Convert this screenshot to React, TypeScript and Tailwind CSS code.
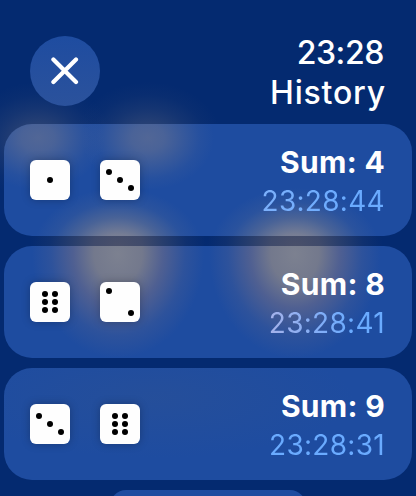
import React from "react"

interface Roll {
  dice: number[]
  time: string
  glow: string
  tint: string
}

// pip centers on a 40x40 die
const pips: Record<number, [number, number][]> = {
  1: [[20, 20]],
  2: [[9, 9], [31, 31]],
  3: [[9, 12], [20, 20], [31, 28]],
  6: [[15, 12], [25, 12], [15, 20], [25, 20], [15, 28], [25, 28]]
}

const rolls: Roll[] = [
  {
    dice: [1, 3],
    time: "23:28:44",
    glow: "bg-[radial-gradient(66px_52px_at_34px_14px,#687292b0,#68729298_25%,#68729258_52%,#6872921c_78%,transparent),radial-gradient(66px_52px_at_144px_14px,#687292b0,#68729298_25%,#68729258_52%,#6872921c_78%,transparent),radial-gradient(86px_66px_at_114px_130px,#868692f0,#868692d8_30%,#80808c70_55%,#80808c20_78%,transparent),radial-gradient(86px_66px_at_291px_130px,#868692f0,#868692d8_30%,#80808c70_55%,#80808c20_78%,transparent)]",
    tint: "from-[#7cb0fb]"
  },
  {
    dice: [6, 2],
    time: "23:28:41",
    glow: "bg-[radial-gradient(86px_104px_at_114px_8px,#82848ff0,#7f7f8ae0_28%,#7870868c_52%,#7870862c_78%,transparent),radial-gradient(86px_104px_at_291px_8px,#82848ff0,#7f7f8ae0_28%,#7870868c_52%,#7870862c_78%,transparent)]",
    tint: "from-[#a4b2ea]"
  },
  {
    dice: [3, 6],
    time: "23:28:31",
    glow: "bg-[radial-gradient(200px_60px_at_150px_30px,#34548e50,transparent)]",
    tint: "from-[#6aabff]"
  }
]

const CloseIcon = (props: { className?: string }) => {
  return <svg className={props.className}
    viewBox="0 0 28 28" fill="none" stroke="currentColor"
    strokeWidth={4.2} strokeLinecap="round">
    <path d="M2.4 2.4 25 25M25 2.4 2.4 25" />
  </svg>
}

const Die = (props: { value: number }) => {
  return <svg className="w-10 h-10 rounded-md bg-[#fefefe] shadow-[0_0_8px_#00000040]"
    viewBox="0 0 40 40">
    {pips[props.value].map(([x, y]) =>
      <circle key={x + "-" + y} cx={x} cy={y} r={3} />)}
  </svg>
}

const RollCard = (props: { roll: Roll }) => {
  const { dice, time, glow, tint } = props.roll
  const sum = dice.reduce((a, b) => a + b, 0)

  return <div className={"h-28 shrink-0 flex items-center justify-between rounded-[28px] pl-[26px] pr-[27px] bg-[#1e4ca0] " + glow}>
    <div className="flex gap-[30px]">
      {dice.map((value, i) => <Die key={i} value={value} />)}
    </div>
    <div className="pt-1 text-right">
      <div className="text-[30px] leading-[39px] tracking-[0.3px] font-bold text-white"
        children={"Sum: " + sum} />
      <div className={"text-[28px] leading-[39px] tracking-[0.3px] text-transparent bg-clip-text bg-linear-to-r to-[#6aabff] to-70% " + tint}
        children={time} />
    </div>
  </div>
}

export default function App() {
  return <div className="w-[416px] h-[496px] overflow-hidden flex flex-col font-['Inter',sans-serif] bg-[#042a70] bg-[radial-gradient(74px_58px_at_38px_140px,#465478b0,#46547880_30%,#46547840_55%,#46547814_78%,transparent),radial-gradient(74px_58px_at_148px_140px,#465478b0,#46547880_30%,#46547840_55%,#46547814_78%,transparent),radial-gradient(88px_84px_at_118px_248px,#4a506a,#4a506ad8_28%,#4a506a80_52%,#4a506a28_78%,transparent),radial-gradient(88px_84px_at_295px_248px,#4a506a,#4a506ad8_28%,#4a506a80_52%,#4a506a28_78%,transparent)]">
    <header className="h-[124px] shrink-0 flex justify-between pl-[30px] pr-8 pt-[33px]">
      <button className="mt-[3px] w-[70px] h-[70px] flex items-center justify-center rounded-full text-white bg-linear-to-b from-[#1e4ca0] to-[#2b529c]">
        <CloseIcon className="w-7 h-7" />
      </button>
      <div className="text-right text-[32px] leading-10 font-medium text-white">
        <div className="tracking-[-0.4px]">23:28</div>
        <div className="-mr-[2px] tracking-[0.8px]">History</div>
      </div>
    </header>
    <main className="flex flex-col gap-2.5 px-1">
      {rolls.map(roll => <RollCard key={roll.time} roll={roll} />)}
      <div className="h-28 shrink-0 w-[196px] self-center rounded-t-2xl bg-[#1e4ca0]" />
    </main>
  </div>
}
